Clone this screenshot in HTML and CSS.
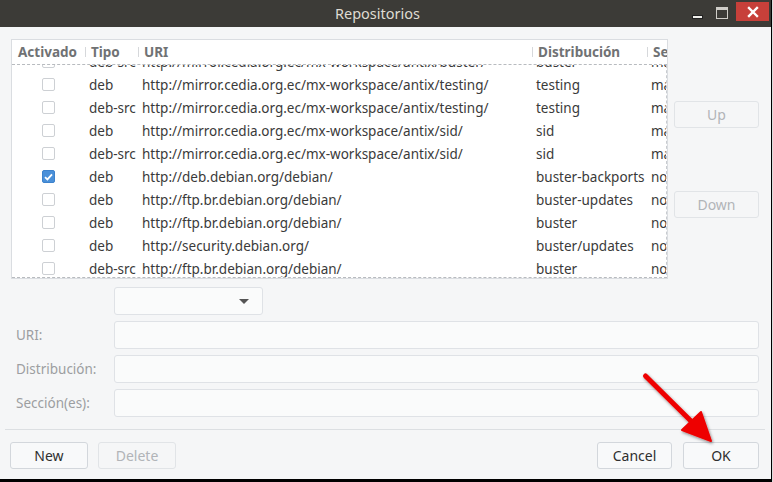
FILE: index.html
```html
<!DOCTYPE html>
<html lang="es">
<head>
<meta charset="utf-8">
<title>Repositorios</title>
<link rel="stylesheet" href="styles.css">
</head>
<body>
<div class="window">
  <div class="titlebar">
    <div class="title">Repositorios</div>
    <div class="controls">
      <span class="ctl-min"></span>
      <span class="ctl-max"></span>
      <span class="ctl-close">
        <svg width="12" height="12" viewBox="0 0 12 12"><path d="M2 2 L10 10 M10 2 L2 10" stroke="#fff" stroke-width="2.4" stroke-linecap="square"/></svg>
      </span>
    </div>
  </div>
  <div class="content">
    <div class="top">
      <div class="table">
        <div class="thead">
          <div class="th first">Activado</div>
          <div class="th">Tipo</div>
          <div class="th">URI</div>
          <div class="th">Distribución</div>
          <div class="th">Sección(es)</div>
        </div>
        <div class="tbody">
          <div class="rows">
            <div class="row partial"><div class="cb-cell"><span class="cb"></span></div><div class="td">deb-src</div><div class="td">http://mirror.cedia.org.ec/mx-workspace/antix/buster/</div><div class="td">buster</div><div class="td">main</div></div>
            <div class="row"><div class="cb-cell"><span class="cb"></span></div><div class="td">deb</div><div class="td">http://mirror.cedia.org.ec/mx-workspace/antix/testing/</div><div class="td">testing</div><div class="td">main</div></div>
            <div class="row"><div class="cb-cell"><span class="cb"></span></div><div class="td">deb-src</div><div class="td">http://mirror.cedia.org.ec/mx-workspace/antix/testing/</div><div class="td">testing</div><div class="td">main</div></div>
            <div class="row"><div class="cb-cell"><span class="cb"></span></div><div class="td">deb</div><div class="td">http://mirror.cedia.org.ec/mx-workspace/antix/sid/</div><div class="td">sid</div><div class="td">main</div></div>
            <div class="row"><div class="cb-cell"><span class="cb"></span></div><div class="td">deb-src</div><div class="td">http://mirror.cedia.org.ec/mx-workspace/antix/sid/</div><div class="td">sid</div><div class="td">main</div></div>
            <div class="row"><div class="cb-cell"><span class="cb checked"><svg width="9" height="8" viewBox="0 0 9 8"><path d="M1 4.2 L3.4 6.4 L8 1.4" fill="none" stroke="#fff" stroke-width="1.8"/></svg></span></div><div class="td">deb</div><div class="td">http://deb.debian.org/debian/</div><div class="td">buster-backports</div><div class="td">non-free</div></div>
            <div class="row"><div class="cb-cell"><span class="cb"></span></div><div class="td">deb</div><div class="td">http://ftp.br.debian.org/debian/</div><div class="td">buster-updates</div><div class="td">non-free</div></div>
            <div class="row"><div class="cb-cell"><span class="cb"></span></div><div class="td">deb</div><div class="td">http://ftp.br.debian.org/debian/</div><div class="td">buster</div><div class="td">non-free</div></div>
            <div class="row"><div class="cb-cell"><span class="cb"></span></div><div class="td">deb</div><div class="td">http://security.debian.org/</div><div class="td">buster/updates</div><div class="td">non-free</div></div>
            <div class="row"><div class="cb-cell"><span class="cb"></span></div><div class="td">deb-src</div><div class="td">http://ftp.br.debian.org/debian/</div><div class="td">buster</div><div class="td">non-free</div></div>
          </div>
        </div>
      </div>
      <div class="side">
        <button class="btn disabled up">Up</button>
        <button class="btn disabled down">Down</button>
      </div>
    </div>
    <div class="form">
      <div class="label"></div>
      <div class="combo"><span class="arrow"></span></div>
      <div class="label">URI:</div>
      <div class="input"></div>
      <div class="label">Distribución:</div>
      <div class="input"></div>
      <div class="label">Sección(es):</div>
      <div class="input"></div>
    </div>
    <div class="sep"></div>
    <div class="buttons">
      <button class="btn b-new">New</button>
      <button class="btn disabled b-del">Delete</button>
      <div class="spacer"></div>
      <button class="btn b-cancel">Cancel</button>
      <button class="btn b-ok">OK</button>
    </div>
  </div>
  <svg class="annot" width="773" height="482" viewBox="0 0 773 482">
    <defs>
      <filter id="sh" x="-20%" y="-20%" width="140%" height="140%">
        <feDropShadow dx="1" dy="1.5" stdDeviation="1.5" flood-color="#000" flood-opacity="0.45"/>
      </filter>
    </defs>
    <g filter="url(#sh)">
      <line x1="645.5" y1="376" x2="700" y2="430" stroke="#ee0000" stroke-width="5" stroke-linecap="round"/>
      <polygon points="711,441 682,430 701,412" fill="#ee0000" stroke="#ee0000" stroke-width="2" stroke-linejoin="round"/>
    </g>
  </svg>
</div>
</body>
</html>
```
FILE: styles.css
```css
* { box-sizing: border-box; }
html { background: #dcdcdc; }
body {
  margin: 0;
  width: 773px;
  height: 482px;
  overflow: hidden;
  font-family: "Noto Sans", "Open Sans", sans-serif;
}
.window {
  position: relative;
  width: 772px;
  height: 482px;
  display: flex;
  flex-direction: column;
  background: #f5f6f7;
  border-right: 1px solid #000;
  border-bottom: 3px solid #000;
}
.titlebar {
  height: 27px;
  flex: none;
  background: #3c3b37;
  display: flex;
  align-items: stretch;
}
.title {
  flex: 1;
  text-align: center;
  padding-left: 66px;
  color: #dfdbd2;
  font-size: 14.5px;
  line-height: 27px;
}
.controls {
  width: 82px;
  display: flex;
  align-items: flex-start;
  padding-left: 3px;
}
.ctl-min {
  margin-top: 15px;
  width: 11px;
  height: 4px;
  background: #f0f0ec;
  border: 1px solid #222;
}
.ctl-max {
  margin-top: 7px;
  margin-left: 13px;
  width: 12px;
  height: 12px;
  border: 1px solid #cfcdc8;
  border-top-width: 3px;
  background: #3c3b37;
}
.ctl-close {
  margin-top: 2px;
  margin-left: 8px;
  width: 33px;
  height: 19px;
  background: #c7403a;
  display: flex;
  align-items: center;
  justify-content: center;
}
.content {
  flex: 1;
  display: flex;
  flex-direction: column;
  padding: 12px 0 0 0;
}
.top {
  display: flex;
  padding-left: 11px;
}
.table {
  width: 657px;
  height: 240px;
  border: 1px solid #dadde1;
  background: #fff;
  display: flex;
  flex-direction: column;
}
.thead {
  height: 24px;
  flex: none;
  display: grid;
  grid-template-columns: 73px 53px 394px 115px 1fr;
  align-items: stretch;
  overflow: hidden;
}
.th {
  font-size: 13.5px;
  font-weight: bold;
  color: #707274;
  padding-left: 6px;
  line-height: 24px;
  white-space: nowrap;
  overflow: hidden;
  background: linear-gradient(#d6d8db, #d6d8db) no-repeat left center / 1px 10px;
}
.th.first { background: none; }
.tbody {
  height: 214px;
  overflow: hidden;
  border-top: 1px dashed #b8bbbf;
  border-bottom: 1px dashed #b8bbbf;
}
.rows {
  margin-top: -15px;
  border-right: 1px dashed #c8cbcf;
  width: 655px;
}
.row {
  height: 23px;
  display: grid;
  grid-template-columns: 73px 53px 394px 115px 1fr;
  align-items: center;
  font-size: 13.5px;
  color: #3a3a3a;
  overflow: hidden;
}
.td {
  padding-left: 4px;
  white-space: nowrap;
  overflow: hidden;
}
.cb-cell {
  display: flex;
  justify-content: center;
}
.cb {
  width: 13px;
  height: 13px;
  border: 1px solid #cdd0d4;
  border-radius: 2px;
  background: #fff;
  display: flex;
  align-items: center;
  justify-content: center;
}
.cb.checked {
  background: #4a90d9;
  border-color: #3d82cc;
}
.side {
  display: flex;
  flex-direction: column;
  padding-left: 6px;
  padding-top: 62px;
  gap: 63px;
}
.btn {
  font-family: inherit;
  width: 78px;
  height: 27px;
  border: 1px solid #d3d7dc;
  border-radius: 3px;
  background: #f8f9fa;
  color: #2f2f2f;
  font-size: 14px;
  padding: 0;
}
.btn.disabled { color: #b1b4b8; border-color: #e1e4e7; background: #f5f6f7; }
.side .btn { width: 85px; }
.form {
  display: grid;
  grid-template-columns: 98px 645px;
  grid-auto-rows: 28px;
  row-gap: 6px;
  padding-left: 16px;
  padding-top: 8px;
  align-items: center;
}
.label {
  font-size: 13.5px;
  color: #9c9ea1;
}
.combo, .input {
  height: 28px;
  border: 1px solid #dfe2e6;
  border-radius: 3px;
  background: #fafbfb;
}
.combo {
  width: 149px;
  display: flex;
  justify-content: flex-end;
  align-items: center;
  padding-right: 13px;
}
.arrow {
  width: 0;
  height: 0;
  border-left: 5px solid transparent;
  border-right: 5px solid transparent;
  border-top: 5px solid #555;
}
.sep {
  margin: 12px 6px 0 5px;
  height: 1px;
  background: #dcdfe2;
}
.buttons {
  display: flex;
  padding: 12px 12px 0 10px;
}
.b-del { margin-left: 10px; }
.b-cancel { width: 75px; }
.b-ok { width: 76px; margin-left: 11px; }
.buttons .spacer { flex: 1; }
.annot {
  position: absolute;
  left: 0;
  top: 0;
  pointer-events: none;
}
```
